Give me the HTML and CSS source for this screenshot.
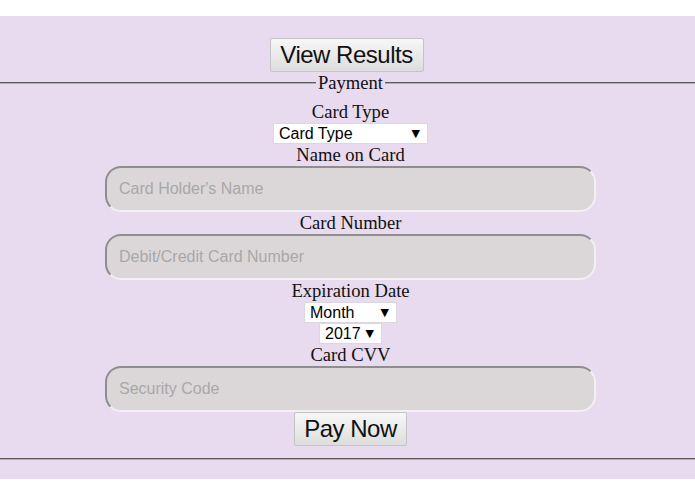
FILE: index.html
```html
<!DOCTYPE html>
<html>
<head>
<meta charset="utf-8">
<link rel="stylesheet" href="styles.css">
</head>
<body>
<div class="page">
  <button class="btn btn-results" type="button">View Results</button>
  <fieldset class="payment">
    <legend class="legend">Payment</legend>
    <div class="label">Card Type</div>
    <span class="select select-type"><select><option>Card Type</option></select></span>
    <div class="label">Name on Card</div>
    <input class="field" type="text" placeholder="Card Holder's Name">
    <div class="label">Card Number</div>
    <input class="field" type="text" placeholder="Debit/Credit Card Number">
    <div class="label">Expiration Date</div>
    <span class="select select-month"><select><option>Month</option></select></span>
    <span class="select select-year"><select><option>2017</option></select></span>
    <div class="label">Card CVV</div>
    <input class="field" type="text" placeholder="Security Code">
    <button class="btn btn-pay" type="button">Pay Now</button>
  </fieldset>
</div>
</body>
</html>
```
FILE: styles.css
```css
html, body {
  margin: 0;
  padding: 0;
  background: #ffffff;
}
body {
  font-family: "Liberation Serif", "Times New Roman", serif;
}
.page {
  margin-top: 16px;
  height: 463px;
  box-sizing: border-box;
  padding-top: 22px;
  background: #e8daef;
}
.btn {
  display: block;
  margin: 0 auto;
  height: 34px;
  padding: 0;
  white-space: nowrap;
  font-family: "Liberation Sans", Arial, sans-serif;
  font-size: 24px;
  line-height: 32px;
  letter-spacing: -0.5px;
  color: #111;
  background: linear-gradient(#f7f7f7, #dddddd);
  border: 1px solid #c4c4c4;
  border-radius: 2px;
}
.btn-results {
  width: 154px;
  position: relative;
  left: -1px;
}
.btn-pay {
  width: 113px;
}
.payment {
  margin: 0;
  padding: 8px 0 12px 6px;
  border: none;
  border-top: 2px groove #b0b0b0;
  border-bottom: 2px groove #b0b0b0;
  text-align: center;
}
.legend {
  font-size: 18.6px;
  line-height: 21px;
  padding: 0 2px;
  color: #111;
}
.label {
  font-size: 18.6px;
  line-height: 22px;
  color: #111;
  margin: 0;
}
.select {
  display: block;
  position: relative;
  margin: 0 auto;
  height: 21px;
}
.select select {
  appearance: none;
  -webkit-appearance: none;
  display: block;
  width: 100%;
  height: 21px;
  margin: 0;
  padding: 0 0 0 5px;
  font-family: "Liberation Sans", Arial, sans-serif;
  font-size: 16px;
  color: #000;
  background: #fff;
  border: 1px solid #dcd6e0;
  border-radius: 0;
}
.select::after {
  content: "\25BC";
  position: absolute;
  right: 8px;
  top: 4px;
  font-family: "DejaVu Sans", sans-serif;
  font-size: 11px;
  line-height: 13px;
  color: #000;
  pointer-events: none;
}
.select-type { width: 155px; }
.select-month { width: 93px; }
.select-year { width: 63px; }
.field {
  display: block;
  box-sizing: border-box;
  width: 491px;
  height: 46px;
  margin: 0 auto;
  padding: 0 12px;
  font-family: "Liberation Sans", Arial, sans-serif;
  font-size: 16px;
  background: #dbd7d8;
  border: 2px solid;
  border-color: #8e8e8e #f2f0f2 #f2f0f2 #8e8e8e;
  border-radius: 16px;
  outline: none;
}
.field::placeholder {
  color: #a8a8a8;
}
```
